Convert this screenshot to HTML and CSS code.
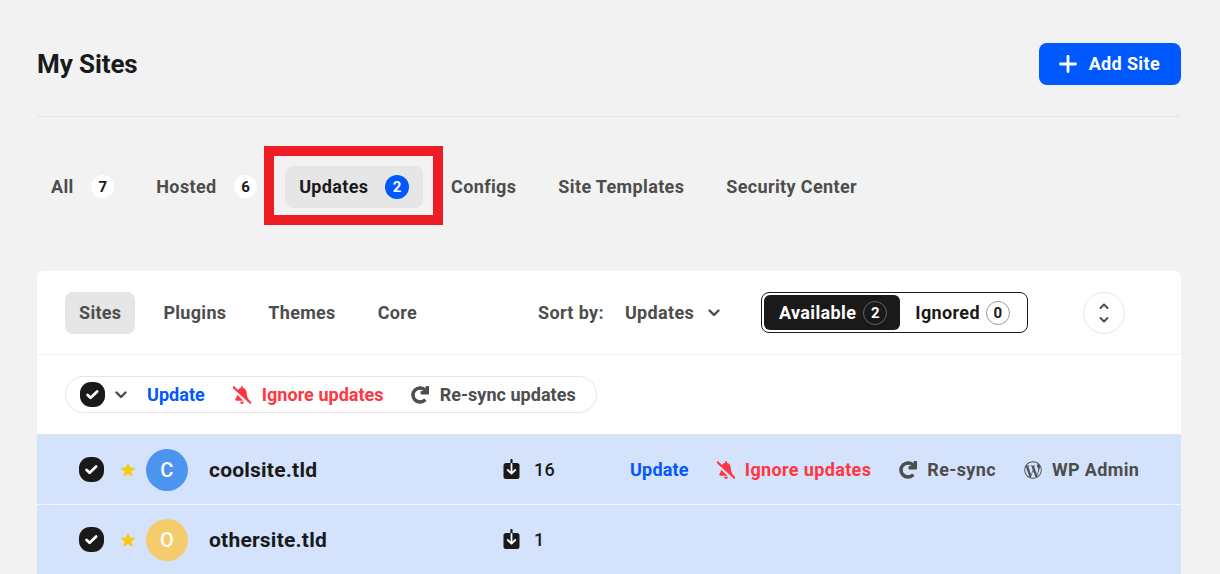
FILE: index.html
```html
<!DOCTYPE html>
<html>
<head>
  <meta charset="utf-8">
  <title>My Sites</title>
  <link rel="stylesheet" href="styles.css">
</head>
<body>
<svg class="icon-defs" aria-hidden="true">
  <symbol id="i-bell" viewBox="20 0 600 512" preserveAspectRatio="none"><path d="M633.82 458.1l-90.62-70.05c.19-1.38.8-2.66.8-4.05.05-7.55-2.61-15.27-8.61-21.71-19.32-20.76-55.47-51.99-55.47-154.29 0-77.7-54.48-139.9-127.94-155.16V32c0-17.67-14.32-32-31.98-32s-31.98 14.33-31.98 32v20.84c-40.33 8.38-74.66 31.07-97.59 62.57L45.47 3.37C38.49-2.05 28.43-.8 23.01 6.18L3.37 31.45C-2.05 38.42-.8 48.47 6.18 53.9l588.35 454.72c6.98 5.43 17.03 4.17 22.46-2.81l19.64-25.27c5.42-6.97 4.17-17.02-2.81-22.44zM157.23 251.54c-8.61 67.96-36.41 93.33-52.62 110.75-6 6.45-8.66 14.16-8.61 21.71.11 16.4 12.98 32 32.1 32h241.92L157.23 251.54zM320 512c35.32 0 63.97-28.65 63.97-64H256.03c0 35.35 28.65 64 63.97 64z"/></symbol>
  <symbol id="i-redo" viewBox="-16 -16 544 544"><path stroke="currentColor" stroke-width="34" d="M500.33 0h-47.41a12 12 0 0 0-12 12.57l4 82.76A247.42 247.42 0 0 0 256 8C119.34 8 7.9 119.53 8 256.19 8.1 393.07 119.1 504 256 504a247.1 247.1 0 0 0 166.18-63.91 12 12 0 0 0 .48-17.43l-34-34a12 12 0 0 0-16.38-.55A176 176 0 1 1 402.1 157.8l-101.53-4.87a12 12 0 0 0-12.57 12v47.41a12 12 0 0 0 12 12h200.33a12 12 0 0 0 12-12V12a12 12 0 0 0-12-12z"/></symbol>
  <symbol id="i-wp" viewBox="0 0 512 512"><path d="M256 8C119.3 8 8 119.2 8 256c0 136.7 111.3 248 248 248s248-111.3 248-248C504 119.2 392.7 8 256 8zM33 256c0-32.3 6.9-63 19.3-90.7l106.4 291.4C84.3 420.5 33 344.2 33 256zm223 223c-21.9 0-43-3.2-63-9.1l66.9-194.4 68.5 187.8c.5 1.1 1 2.1 1.6 3.1-23.1 8.1-48 12.6-74 12.6zm30.7-327.5c13.4-.7 25.5-2.1 25.5-2.1 12-1.4 10.6-19.1-1.4-18.4 0 0-36.1 2.8-59.4 2.8-21.9 0-58.7-2.8-58.7-2.8-12-.7-13.4 17.7-1.4 18.4 0 0 11.4 1.4 23.4 2.1l34.7 95.2L200.6 393l-81.2-241.5c13.4-.7 25.5-2.1 25.5-2.1 12-1.4 10.6-19.1-1.4-18.4 0 0-36.1 2.8-59.4 2.8-4.2 0-9.1-.1-14.4-.3C109.6 73 178.1 33 256 33c58 0 110.9 22.2 150.6 58.5-1-.1-1.9-.2-2.9-.2-21.9 0-37.4 19.1-37.4 39.6 0 18.4 10.6 33.9 21.9 52.3 8.5 14.8 18.4 33.9 18.4 61.5 0 19.1-7.3 41.2-17 72.1l-22.2 74.3-80.7-239.6zm81.4 297.2l68.1-196.9c12.7-31.8 17-57.2 17-79.9 0-8.2-.5-15.8-1.5-22.9 17.4 31.8 27.3 68.2 27.3 107 0 82.3-44.6 154.1-110.9 192.7z"/></symbol>
  <symbol id="i-check" viewBox="0 0 25 25"><path d="M7.6 13l3 2.8 6.6-6.2" fill="none" stroke="#fff" stroke-width="2.8" stroke-linecap="round" stroke-linejoin="round"/></symbol>
  <symbol id="i-down" viewBox="0 0 12 8"><path d="M1.5 1.5L6 6l4.5-4.5" fill="none" stroke="currentColor" stroke-width="2.4" stroke-linecap="round" stroke-linejoin="round"/></symbol>
  <symbol id="i-update" viewBox="0 0 17 20"><rect x="0.5" y="4" width="16" height="16" rx="2.5" fill="#1a1a1a"/><path d="M8.5 1v4" stroke="#1a1a1a" stroke-width="2.2" stroke-linecap="round"/><path d="M8.5 5v9.5M4.8 11l3.7 3.7 3.7-3.7" fill="none" stroke="#fff" stroke-width="1.8" stroke-linecap="round" stroke-linejoin="round"/></symbol>
  <symbol id="i-star" viewBox="0 0 16 15"><path d="M8 .4l2.1 5.1 5.5.4-4.2 3.5 1.3 5.4L8 11.9l-4.7 2.9 1.3-5.4L.4 5.9l5.5-.4z"/></symbol>
</svg>

<div class="page">
  <header class="page-head">
    <h1>My Sites</h1>
    <a class="add-btn">
      <svg class="plus" viewBox="0 0 18 18"><path d="M9 1.5v15M1.5 9h15" stroke="#fff" stroke-width="2.8" stroke-linecap="round"/></svg>
      Add Site
    </a>
  </header>

  <nav class="tabs">
    <a class="tab">All <span class="count">7</span></a>
    <a class="tab">Hosted <span class="count">6</span></a>
    <a class="tab active">Updates <span class="count">2</span><i class="highlight"></i></a>
    <a class="tab">Configs</a>
    <a class="tab">Site Templates</a>
    <a class="tab">Security Center</a>
  </nav>

  <section class="card">
    <div class="toolbar">
      <div class="subtabs">
        <a class="subtab active">Sites</a>
        <a class="subtab">Plugins</a>
        <a class="subtab">Themes</a>
        <a class="subtab">Core</a>
      </div>
      <div class="sort">
        <span>Sort by:</span>
        <a class="sort-value">Updates <svg class="chev"><use href="#i-down"/></svg></a>
      </div>
      <div class="toggle">
        <a class="toggle-item on">Available <span class="mini">2</span></a>
        <a class="toggle-item">Ignored <span class="mini">0</span></a>
      </div>
      <a class="expand">
        <svg viewBox="0 0 12 22" width="12" height="22"><path d="M2.500 6L6 2.500 9.500 6M2.500 16L6 19.500 9.500 16" fill="none" stroke="#4d4d4d" stroke-width="2" stroke-linecap="round" stroke-linejoin="round"/></svg>
      </a>
    </div>

    <div class="bulk-row">
      <div class="bulk">
        <svg class="check"><use href="#i-check"/></svg>
        <svg class="chev bulk-chev"><use href="#i-down"/></svg>
        <a class="act blue">Update</a>
        <a class="act red"><svg class="ico bell"><use href="#i-bell"/></svg>Ignore updates</a>
        <a class="act gray"><svg class="ico"><use href="#i-redo"/></svg>Re-sync updates</a>
      </div>
    </div>

    <div class="site">
      <div class="site-main">
        <svg class="check"><use href="#i-check"/></svg>
        <svg class="star"><use href="#i-star"/></svg>
        <span class="avatar blue-bg">C</span>
        <span class="site-name">coolsite.tld</span>
      </div>
      <div class="site-count"><svg class="up-ico"><use href="#i-update"/></svg>16</div>
      <div class="site-actions">
        <a class="act blue">Update</a>
        <a class="act red"><svg class="ico bell"><use href="#i-bell"/></svg>Ignore updates</a>
        <a class="act gray"><svg class="ico"><use href="#i-redo"/></svg>Re-sync</a>
        <a class="act gray"><svg class="ico"><use href="#i-wp"/></svg>WP Admin</a>
      </div>
    </div>

    <div class="site">
      <div class="site-main">
        <svg class="check"><use href="#i-check"/></svg>
        <svg class="star"><use href="#i-star"/></svg>
        <span class="avatar yellow-bg">O</span>
        <span class="site-name">othersite.tld</span>
      </div>
      <div class="site-count"><svg class="up-ico"><use href="#i-update"/></svg>1</div>
    </div>
  </section>
</div>
</body>
</html>
```

FILE: styles.css
```css
* {
  box-sizing: border-box;
  margin: 0;
  padding: 0;
}

html, body {
  height: 100%;
  overflow: hidden;
}

body {
  background-color: #f2f2f2;
  color: #1a1a1a;
  font-family: Roboto, "Liberation Sans", sans-serif;
  font-size: 18px;
  font-weight: 700;
  letter-spacing: .36px;
}

.icon-defs {
  display: none;
}

.page {
  padding: 0 39px 0 37px;
}

/* top */
.page-head {
  display: flex;
  justify-content: space-between;
  align-items: center;
  height: 117px;
  padding-top: 11px;
  border-bottom: 1px solid #e6e6e6;
}

.page-head h1 {
  font-size: 26px;
  font-weight: 700;
  letter-spacing: -.1px;
}

.add-btn {
  display: flex;
  align-items: center;
  gap: 12px;
  height: 42px;
  padding: 0 21px 0 20px;
  background-color: #0059ff;
  border-radius: 8px;
  color: #fff;
}

.plus {
  width: 18px;
  height: 18px;
}

/* tabs */
.tabs {
  display: flex;
  gap: 14px;
  padding-top: 49px;
  height: 154px;
}

.tab {
  position: relative;
  display: flex;
  align-items: center;
  height: 42px;
  padding: 0 14px 1px;
  border-radius: 8px;
  color: #4d4d4d;
}

.tab.active {
  background-color: #e6e6e6;
  color: #1a1a1a;
}

.count {
  display: flex;
  justify-content: center;
  align-items: center;
  width: 23px;
  height: 23px;
  margin-left: 17.6px;
  background-color: #fff;
  border-radius: 50%;
  color: #1a1a1a;
  font-size: 15px;
  letter-spacing: 0;
}

.tab.active .count {
  width: 24px;
  height: 24px;
  margin-left: 16.6px;
  background-color: #0059ff;
  color: #fff;
}

.highlight {
  position: absolute;
  top: -20px;
  right: -20px;
  bottom: -17px;
  left: -21px;
  border: 10px solid #ee1c25;
  pointer-events: none;
}

/* card */
.card {
  background-color: #fff;
  border-radius: 6px 6px 0 0;
}

.toolbar {
  display: flex;
  align-items: center;
  height: 84px;
  padding-left: 28px;
  border-bottom: 1px solid #f0f0f0;
}

.subtabs {
  display: flex;
  gap: 14px;
  width: 473px;
}

.subtab {
  display: flex;
  align-items: center;
  height: 42px;
  padding: 0 14px;
  border-radius: 8px;
  color: #4d4d4d;
  letter-spacing: .3px;
}

.subtab.active {
  background-color: #e6e6e6;
}

.sort {
  display: flex;
  align-items: center;
  gap: 21px;
  width: 223px;
  color: #4d4d4d;
}

.sort-value {
  display: flex;
  align-items: center;
  gap: 14px;
}

.chev {
  width: 12px;
  height: 8px;
  color: #4d4d4d;
}

.toggle {
  display: flex;
  width: 267px;
  height: 41px;
  padding: 2px;
  border: 1px solid #1a1a1a;
  border-radius: 8px;
}

.toggle-item {
  display: flex;
  align-items: center;
  padding: 0 13px 0 15px;
  border-radius: 6px;
}

.toggle-item.on {
  background-color: #1a1a1a;
  color: #fff;
}

.mini {
  display: flex;
  justify-content: center;
  align-items: center;
  width: 24px;
  height: 24px;
  margin-left: 6px;
  border: 1px solid #999;
  border-radius: 50%;
  font-size: 15px;
  letter-spacing: 0;
}

.toggle-item.on .mini {
  margin-left: 7px;
  border-color: #666;
}

.expand {
  display: flex;
  justify-content: center;
  align-items: center;
  width: 42px;
  height: 42px;
  margin-left: 55px;
  border: 1px solid #e6e6e6;
  border-radius: 50%;
}

.bulk-row {
  height: 80px;
  padding: 21px 0 0 28px;
  border-bottom: 1px solid #e6e6e6;
}

.bulk {
  display: flex;
  align-items: center;
  width: 532px;
  height: 37px;
  padding-left: 14px;
  border: 1px solid #e6e6e6;
  border-radius: 19px;
  letter-spacing: .03px;
}

.check {
  flex: none;
  width: 25px;
  height: 25px;
  background-color: #1a1a1a;
  border-radius: 11px;
}

.bulk-chev {
  margin: 0 20px 0 10px;
}

.act {
  display: flex;
  align-items: center;
}

.bulk .blue + .red {
  margin-left: 28px;
}

.bulk .red + .gray {
  margin-left: 27px;
}

.ico {
  width: 18px;
  height: 18px;
  margin-right: 10px;
  fill: currentColor;
}

.bulk .ico {
  margin-right: 11px;
}

.blue { color: #0059ff; }
.red { color: #ff3640; }
.gray { color: #4d4d4d; }

/* site rows */
.site {
  display: flex;
  align-items: center;
  height: 70px;
  padding-left: 42px;
  background-color: #d4e2fc;
  border-bottom: 1px solid #f0f4fd;
}

.site-main {
  display: flex;
  align-items: center;
  width: 424px;
}

.star {
  flex: none;
  width: 16px;
  height: 15px;
  margin: 0 10px 0 16px;
  fill: #f7c90f;
}

.avatar {
  display: flex;
  justify-content: center;
  align-items: center;
  width: 42px;
  height: 42px;
  border-radius: 50%;
  color: #fff;
  font-size: 20px;
  font-weight: 500;
}

.blue-bg { background-color: #4c94f0; }
.yellow-bg { background-color: #f4cc6b; }

.site-name {
  margin-left: 21px;
  font-size: 21px;
  letter-spacing: .22px;
}

.site-count {
  display: flex;
  align-items: center;
  width: 127px;
  font-weight: 500;
}

.up-ico {
  width: 17px;
  height: 20px;
  margin: 0 14px 2px 0;
}

.site-actions {
  display: flex;
  gap: 28px;
}

.site-actions .blue {
  letter-spacing: .2px;
}
```
